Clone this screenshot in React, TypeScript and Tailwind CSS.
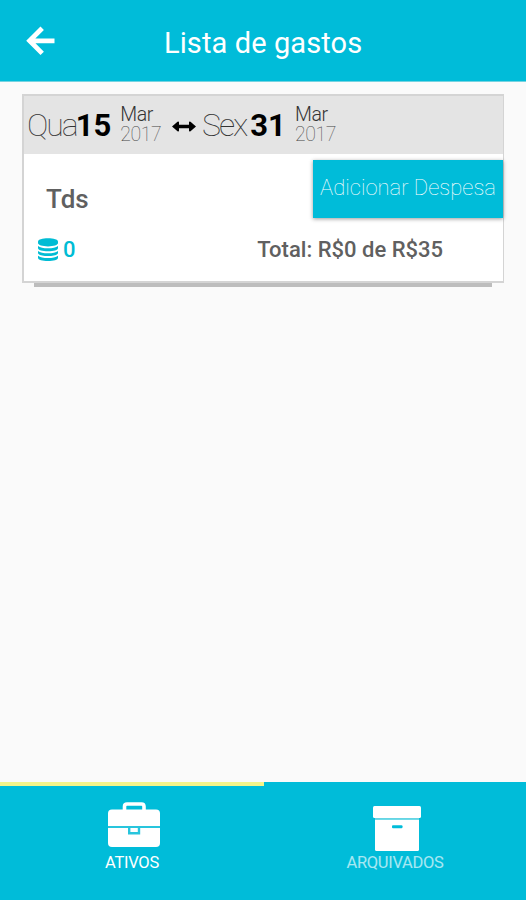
import { useState } from 'react'

interface Expense {
  name: string
  items: number
  spent: number
  budget: number
}

interface DateProps {
  weekday: string
  day: string
  month: string
  year: string
  className?: string
  dayClassName?: string
}

function BackIcon() {
  return (
    <svg width="29" height="30" viewBox="0 0 29 30" fill="none" stroke="#fff" strokeWidth="4.8">
      <path d="M16.2 2.2 3.6 14.8 16.2 27.4M4 14.8H28.5" />
    </svg>
  )
}

function RangeIcon() {
  return (
    <svg width="24" height="11" viewBox="0 0 24 11" fill="#000">
      <path d="M0 5.500 5.500.8Q6.800 0 7 1.300V3.700H17V1.300Q17.200 0 18.500.8L24 5.500 18.500 10.200Q17.200 11 17 9.700V7.300H7V9.700Q6.800 11 5.500 10.200Z" />
    </svg>
  )
}

function CoinsIcon() {
  return (
    <svg width="20" height="24" viewBox="0 0 20 24" fill="#00bcd4">
      <path d="M0 3.7C0 1.5 4.4.3 10 .3s10 1.2 10 3.4v1.400c0 2-4.400 3.300-10 3.300S0 7.100 0 5.100Z" />
      <path d="M0 8c2 1.500 5.500 2.300 10 2.300s8-.8 10-2.300v1.900c0 2.100-4.400 3.300-10 3.300S0 12 0 9.900Z" />
      <path d="M0 12.900c2 1.500 5.500 2.300 10 2.300s8-.8 10-2.300v1.900c0 2.100-4.400 3.300-10 3.300S0 16.900 0 14.800Z" />
      <path d="M0 17.800c2 1.500 5.500 2.300 10 2.300s8-.8 10-2.300v1.900c0 2.100-4.400 3.300-10 3.300S0 21.800 0 19.700Z" />
    </svg>
  )
}

function BriefcaseIcon() {
  return (
    <svg width="54" height="46" viewBox="0 0 54 46" fill="none">
      <path d="M17.500 9V4.500Q17.500 2 20 2H34.500Q37 2 37 4.500V9" stroke="#fff" strokeWidth="3.600" />
      <path d="M5 7.500H49Q53 7.500 53 11.500V41Q53 45 49 45H5Q1 45 1 41V11.500Q1 7.500 5 7.500Z" fill="#fff" />
      <path d="M1 24.900H53" stroke="#28c5dd" strokeWidth="2" />
      <path d="M22.200 25V31.300H32V25" stroke="#28c5dd" strokeWidth="2.400" />
    </svg>
  )
}

function ArchiveIcon() {
  return (
    <svg width="48" height="46" viewBox="0 0 48 46">
      <rect width="48" height="12" rx="1.500" fill="#fff" />
      <path d="M2 13.500H46V43.500Q46 45 44.500 45H3.500Q2 45 2 43.500Z" fill="#fff" />
      <path d="M2 12.700H46" stroke="#65d5e4" strokeWidth="1.600" />
      <rect x="19" y="19.200" width="10.500" height="3" rx="1" fill="#00bcd9" />
    </svg>
  )
}

function DateLabel({ weekday, day, month, year, className = '', dayClassName = '' }: DateProps) {
  return (
    <div className={`flex ${className}`}>
      <div className="flex pt-[11px] text-[32px] leading-[37px]">
        <span className="font-thin tracking-[-2px] text-[#333]">{weekday}</span>
        <span className={`text-[31px] font-bold leading-[38px] text-black ${dayClassName}`}>{day}</span>
      </div>
      <div className="ml-[9px] pt-[9px] text-[19.5px] leading-[20px] tracking-[-0.4px]">
        <div className="font-light text-[#333]">{month}</div>
        <div className="font-thin text-[#444]">{year}</div>
      </div>
    </div>
  )
}

function ExpenseCard({ expense }: { expense: Expense }) {
  return (
    <section className="ml-[22px] mt-3 w-[482px]">
      <div className="h-[189px] border-2 border-r-[1px] border-[#d4d4d4] bg-white">
        <div className="flex h-[58px] bg-[#e4e4e4] pl-[3px]">
          <DateLabel weekday="Qua" day="15" month="Mar" year="2017" className="w-[145px]" dayClassName="-ml-px" />
          <div className="w-[30px] pt-[25px]"><RangeIcon /></div>
          <DateLabel weekday="Sex" day="31" month="Mar" year="2017" dayClassName="ml-[4px]" />
        </div>
        <div className="flex justify-between">
          <h2 className="ml-[22px] mt-[29px] text-[26px] font-medium leading-[32px] text-[#606060]">{expense.name}</h2>
          <button className="mt-[6px] h-[58px] w-[190px] bg-[#00bcd9] pb-[3px] text-[22px] font-thin leading-[29px] text-white shadow-[0_1px_4px_rgba(0,0,0,0.4)]">
            Adicionar Despesa
          </button>
        </div>
        <div className="mt-[18px] flex items-center pl-[14px] pr-[60px] text-[22px] font-medium leading-[28px]">
          <CoinsIcon />
          <span className="ml-[5px] text-[#00bcd4]">{expense.items}</span>
          <span className="ml-auto whitespace-nowrap text-[#606060]">
            Total: R${expense.spent} de R${expense.budget}
          </span>
        </div>
      </div>
      <div className="ml-[12px] h-[4px] w-[458px] bg-[#bdbdbd]" />
    </section>
  )
}

export default function App() {
  const [tab, setTab] = useState<'active' | 'archived'>('active')
  const expense: Expense = { name: 'Tds', items: 0, spent: 0, budget: 35 }

  return (
    <div className="flex h-[900px] w-[526px] flex-col overflow-hidden bg-[#fafafa] font-['Roboto',sans-serif]">
      <header className="flex h-[82px] shrink-0 border-b border-[#75d3e0] bg-[#00bcd9]">
        <button className="ml-[26px] flex w-[138px] items-start pt-[26px]" aria-label="Voltar">
          <BackIcon />
        </button>
        <h1 className="mt-[26px] text-[29px] leading-[34px] tracking-[0.1px] text-white">Lista de gastos</h1>
      </header>

      <main className="flex-1">
        <ExpenseCard expense={expense} />
      </main>

      <nav className="flex h-[118px] shrink-0 bg-[#00bcd9] text-[16.5px] leading-[20px] tracking-[-0.3px] text-white">
        <button
          onClick={() => setTab('active')}
          className={`flex w-[264px] flex-col items-center border-t-4 pt-[16px] ${tab === 'active' ? 'border-[#f4f48a]' : 'border-transparent text-white/65'}`}
        >
          <span className="ml-[4px]"><BriefcaseIcon /></span>
          <span className="mt-[5px]">ATIVOS</span>
        </button>
        <button
          onClick={() => setTab('archived')}
          className={`flex w-[262px] flex-col items-center border-t-4 pt-[20px] ${tab === 'archived' ? 'border-[#f4f48a]' : 'border-transparent text-white/65'}`}
        >
          <span className="ml-[4px]"><ArchiveIcon /></span>
          <span className="mt-[1px]">ARQUIVADOS</span>
        </button>
      </nav>
    </div>
  )
}
